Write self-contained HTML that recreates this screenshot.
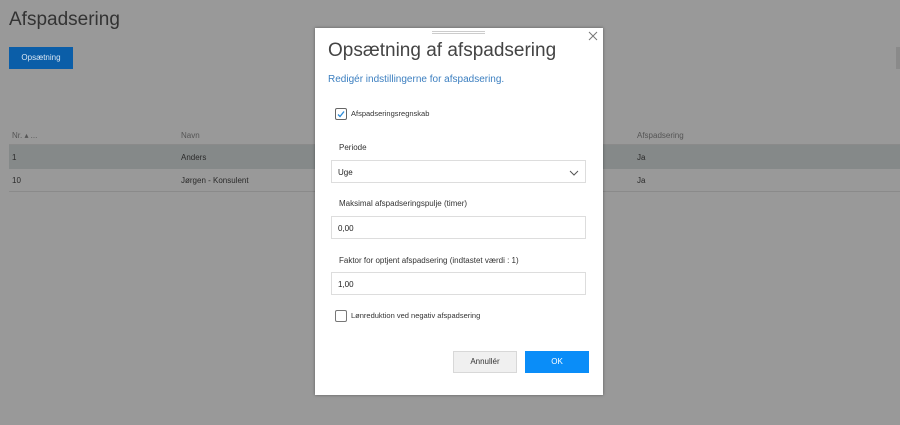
<!DOCTYPE html>
<html><head><meta charset="utf-8"><style>
*{box-sizing:border-box;margin:0;padding:0}
body{width:900px;height:425px;background:#999;font-family:"Liberation Sans",sans-serif;position:relative;overflow:hidden;color:#333}
.abs{position:absolute}
.t{font-size:8px;color:#2a2a2a}
.m{left:315px;top:28px;width:288px;height:367px;background:#fff;box-shadow:0 0 3px rgba(0,0,0,.4)}
.inp{position:absolute;left:16px;width:255px;height:23px;border:1px solid #ddd;font-size:8px;padding:7px 0 0 6px;color:#222}
.lbl{position:absolute;left:24px;font-size:8px;color:#333}
.cb{position:absolute;left:20px;width:12px;height:12px;border:1px solid #777;border-radius:2px}
</style></head><body>
<div class="abs" style="left:9px;top:9px;font-size:19px;color:#333">Afspadsering</div>
<div class="abs" style="left:9px;top:47px;width:64px;height:22px;background:#0b5ea8;color:#d8e6f3;font-size:8px;text-align:center;line-height:22px">Opsætning</div>
<div class="abs" style="left:896px;top:47px;width:4px;height:22px;background:#8a8a8a"></div>
<div class="abs t" style="left:12px;top:131px;color:#555">Nr. ▴ ...</div>
<div class="abs t" style="left:181px;top:131px;color:#555">Navn</div>
<div class="abs t" style="left:637px;top:131px;color:#555">Afspadsering</div>
<div class="abs" style="left:9px;top:144px;width:891px;height:1px;background:#8a8a8a"></div>
<div class="abs" style="left:9px;top:145px;width:891px;height:24px;background:#858989"></div>
<div class="abs t" style="left:12px;top:153px">1</div>
<div class="abs t" style="left:181px;top:153px">Anders</div>
<div class="abs t" style="left:637px;top:153px">Ja</div>
<div class="abs t" style="left:12px;top:176px">10</div>
<div class="abs t" style="left:181px;top:176px">Jørgen - Konsulent</div>
<div class="abs t" style="left:637px;top:176px">Ja</div>
<div class="abs" style="left:9px;top:191px;width:891px;height:1px;background:#8a8a8a"></div>
<div class="abs m">
<div class="abs" style="left:117px;top:3px;width:53px;height:3px;border-top:1px solid #ccc;border-bottom:1px solid #ccc"></div>
<svg class="abs" style="left:273px;top:3px" width="10" height="10" viewBox="0 0 10 10"><path d="M1 1L9 9M9 1L1 9" stroke="#777" stroke-width="1"/></svg>
<div class="abs" style="left:13px;top:12px;font-size:19px;color:#444">Opsætning af afspadsering</div>
<div class="abs" style="left:13px;top:46px;font-size:10px;color:#3c7fc0">Redigér indstillingerne for afspadsering.</div>
<div class="cb" style="top:80px;border-color:#666"><svg width="10" height="10" viewBox="0 0 10 10" style="position:absolute;left:0;top:0"><path d="M2 5.5L4 7.5L8 2.5" stroke="#2a8ad8" stroke-width="1.3" fill="none"/></svg></div>
<div class="abs" style="left:36px;top:81px;font-size:7.5px;color:#333">Afspadseringsregnskab</div>
<div class="lbl" style="top:115px">Periode</div>
<div class="inp" style="top:132px">Uge<svg width="10" height="6" viewBox="0 0 10 6" style="position:absolute;right:6px;top:9px"><path d="M1 1L5 5L9 1" stroke="#555" fill="none"/></svg></div>
<div class="lbl" style="top:171px">Maksimal afspadseringspulje (timer)</div>
<div class="inp" style="top:188px">0,00</div>
<div class="lbl" style="top:228px">Faktor for optjent afspadsering (indtastet værdi : 1)</div>
<div class="inp" style="top:244px">1,00</div>
<div class="cb" style="top:282px"></div>
<div class="abs" style="left:36px;top:283px;font-size:7.5px;color:#333">Lønreduktion ved negativ afspadsering</div>
<div class="abs" style="left:138px;top:323px;width:64px;height:22px;background:#f0f0f0;border:1px solid #d8d8d8;font-size:8px;text-align:center;line-height:20px">Annullér</div>
<div class="abs" style="left:210px;top:323px;width:64px;height:22px;background:#0a8df8;color:#fff;font-size:8px;text-align:center;line-height:22px">OK</div>
</div>
</body></html>
